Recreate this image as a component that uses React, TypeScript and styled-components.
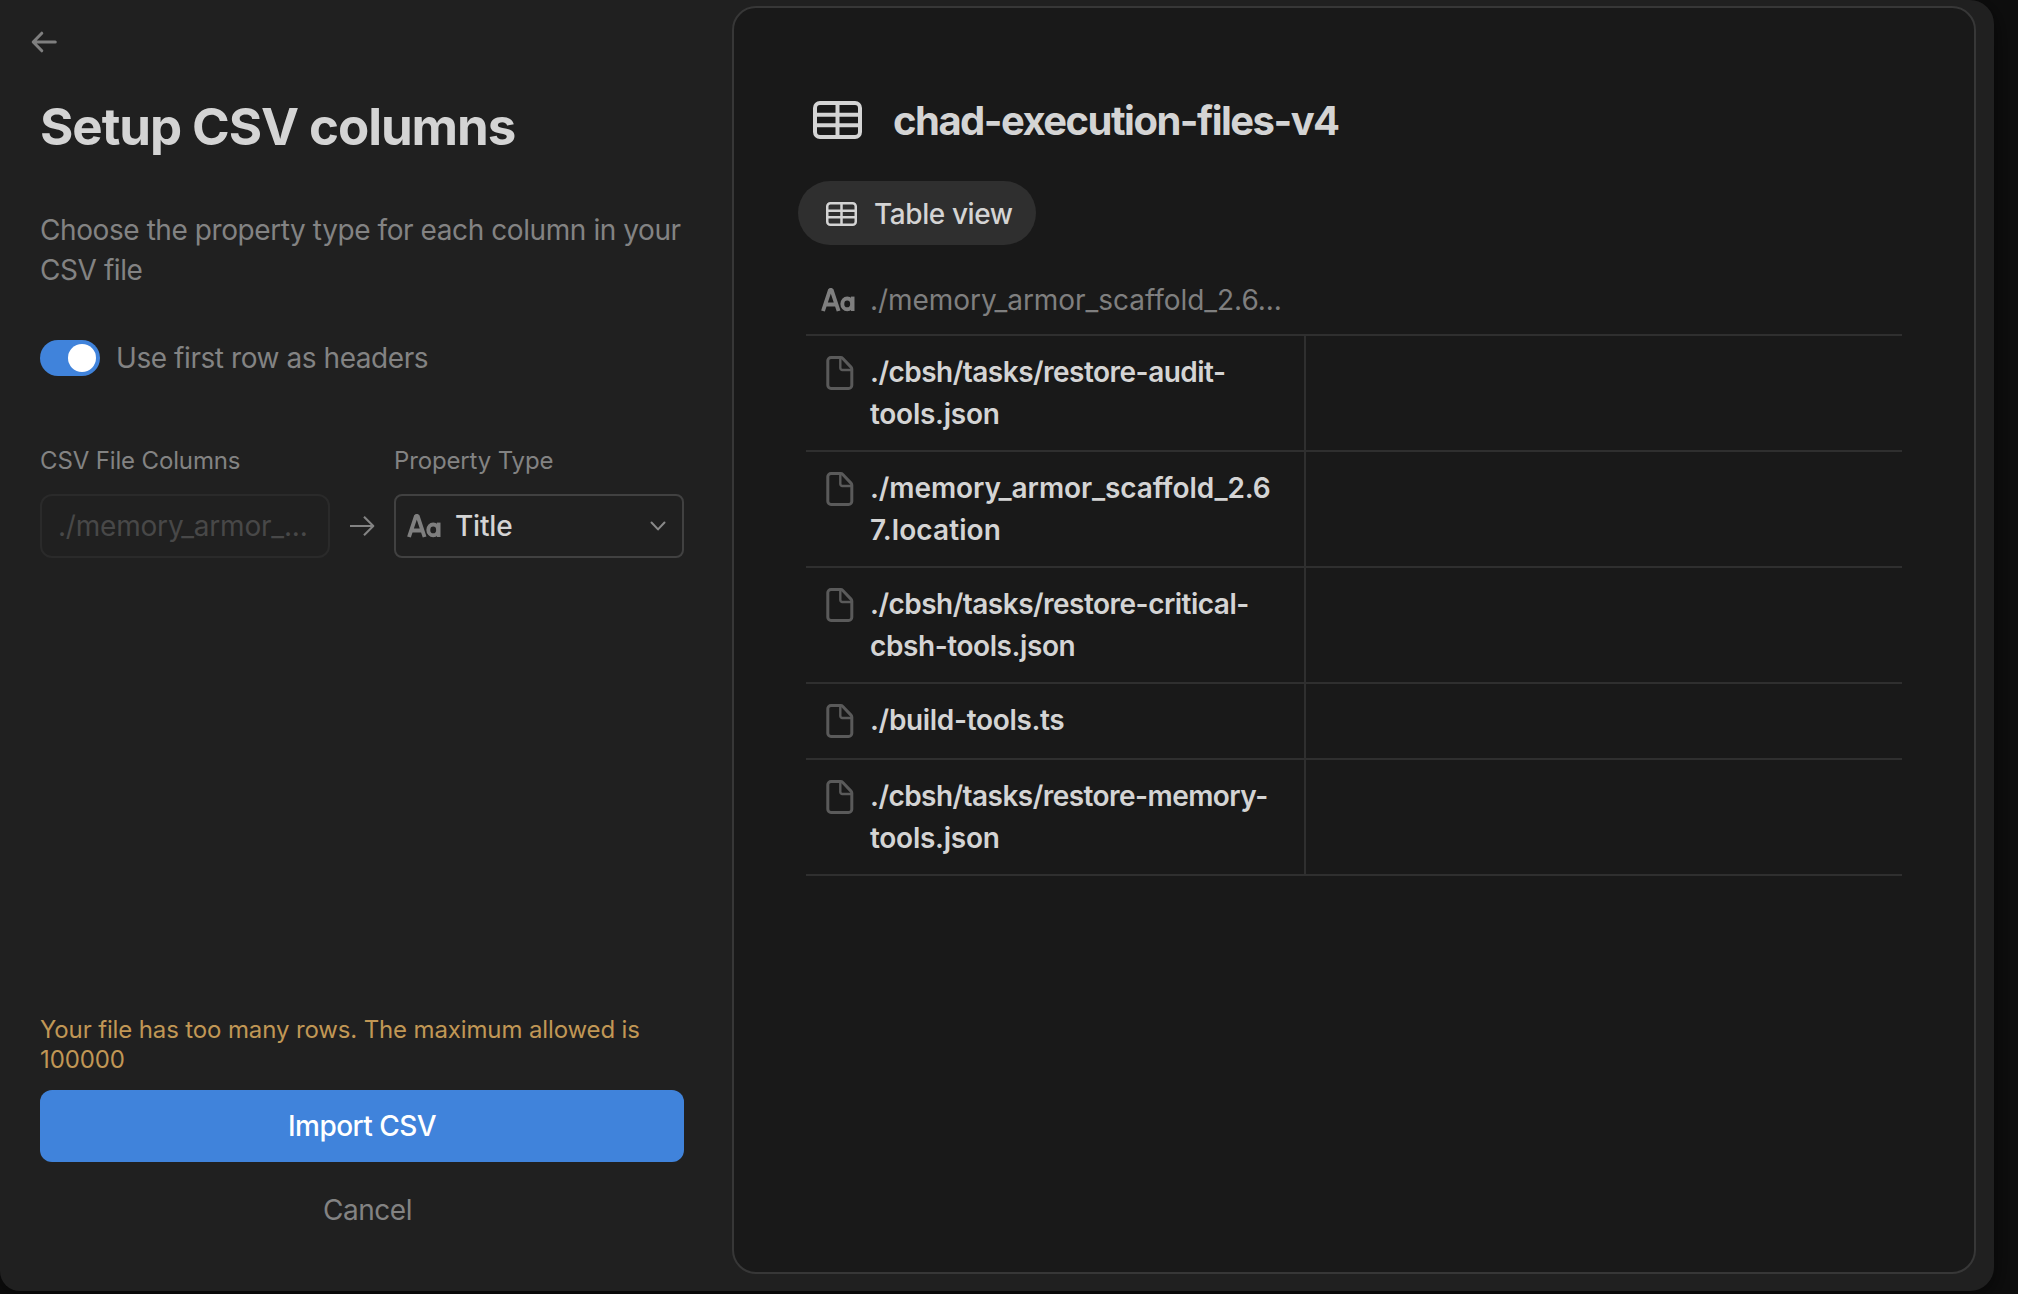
import React from "react";
import styled, { createGlobalStyle } from "styled-components";

const Global = createGlobalStyle`
  * { box-sizing: border-box; }
  body { margin: 0; background: #0e0e0e; }
`;

const Backdrop = styled.div`
  width: 2018px;
  height: 1294px;
  overflow: hidden;
  padding-bottom: 3px;
  background: #0e0e0e;
  font-family: Inter, "Liberation Sans", sans-serif;
  color: #d4d4d4;
`;

const Dialog = styled.main`
  display: flex;
  width: 1994px;
  height: 1291px;
  padding: 6px 18px 17px 0;
  border-radius: 0 24px 24px 20px;
  background: #202020;
  box-shadow: 0 6px 24px rgba(0, 0, 0, 0.6);
`;

const Sidebar = styled.section`
  display: flex;
  flex-direction: column;
  width: 732px;
  padding: 21px 48px 32px 40px;
`;

const BackButton = styled.button`
  display: flex;
  width: 30px;
  height: 30px;
  margin: 0 0 0 -11px;
  padding: 0;
  border: 0;
  background: none;
  color: #7f7f7f;
`;

const Title = styled.h1`
  margin: 40px 0 0;
  font-size: 51px;
  line-height: 60px;
  font-weight: 700;
  letter-spacing: -1.07px;
  white-space: nowrap;
`;

const Intro = styled.p`
  margin: 53px 0 0;
  font-size: 28px;
  line-height: 40px;
  letter-spacing: -0.42px;
  color: #838383;
  white-space: nowrap;
`;

const ToggleRow = styled.label`
  display: flex;
  align-items: center;
  gap: 16px;
  margin-top: 50px;
  height: 36px;
  font-size: 28px;
  letter-spacing: -0.43px;
  color: #838383;
`;

const Switch = styled.span`
  display: flex;
  justify-content: flex-end;
  width: 60px;
  height: 36px;
  padding: 4px;
  border-radius: 18px;
  background: #4083db;
`;

const Knob = styled.span`
  width: 28px;
  height: 28px;
  border-radius: 50%;
  background: #fff;
`;

const Mapping = styled.div`
  display: grid;
  grid-template-columns: 290px 64px 290px;
  row-gap: 16px;
  margin-top: 68px;
  align-items: center;
`;

const ColumnLabel = styled.span`
  font-size: 24px;
  line-height: 34px;
  letter-spacing: -0.14px;
  color: #838383;
`;

const Field = styled.div<{ $active?: boolean }>`
  display: flex;
  align-items: center;
  height: 64px;
  padding: ${(p) => (p.$active ? "0 14px 0 11px" : "0 16px")};
  border: 2px solid ${(p) => (p.$active ? "#414141" : "#2a2a2a")};
  border-radius: ${(p) => (p.$active ? 8 : 12)}px;
  font-size: 28px;
  font-weight: ${(p) => (p.$active ? 500 : 400)};
  letter-spacing: -0.2px;
  color: ${(p) => (p.$active ? "#d4d4d4" : "#484848")};
`;

const FieldText = styled.span`
  flex: 1;
  white-space: nowrap;
`;

const ArrowCell = styled.span`
  display: flex;
  justify-content: center;
  color: #838383;
`;

const Glyph = styled.span<{ $gap: number }>`
  display: flex;
  margin-right: ${(p) => p.$gap}px;
  color: #7f7f7f;
`;

const Footer = styled.footer`
  display: flex;
  flex-direction: column;
  margin-top: auto;
`;

const Warning = styled.p`
  margin: 0 0 15px;
  font-size: 24px;
  line-height: 30px;
  letter-spacing: -0.13px;
  color: #c19755;
  white-space: nowrap;
`;

const ImportButton = styled.button`
  height: 72px;
  border: 0;
  border-radius: 12px;
  background: #4083db;
  color: #fff;
  font: 500 28px Inter, "Liberation Sans", sans-serif;
  letter-spacing: -0.55px;
`;

const CancelButton = styled.button`
  height: 64px;
  margin-top: 16px;
  padding: 0 0 0 11px;
  border: 0;
  background: none;
  color: #838383;
  font: 400 28px Inter, "Liberation Sans", sans-serif;
  letter-spacing: -0.43px;
`;

const Preview = styled.section`
  flex: 1;
  padding: 84px 72px 0 72px;
  border: 2px solid #373737;
  border-radius: 24px;
  background: #191919;
`;

const Heading = styled.h2`
  display: flex;
  align-items: center;
  gap: 31px;
  height: 56px;
  margin: 0;
  padding-left: 7px;
  font-size: 40px;
  font-weight: 700;
  letter-spacing: -1.53px;
  white-space: nowrap;
`;

const ViewTab = styled.div`
  display: flex;
  align-items: center;
  gap: 17px;
  width: 238px;
  height: 64px;
  margin: 33px 0 0 -8px;
  padding: 1px 0 0 28px;
  border-radius: 32px;
  background: #2f2f2f;
  font-size: 28px;
  font-weight: 500;
  letter-spacing: -0.42px;
  white-space: nowrap;
`;

const HeaderRow = styled.div`
  display: flex;
  align-items: center;
  height: 66px;
  margin-top: 23px;
  padding: 0 0 2px 15px;
  font-size: 28px;
  letter-spacing: -0.04px;
  color: #7f7f7f;
`;

const Table = styled.div`
  border-top: 2px solid #2f2f2f;
`;

const Row = styled.div`
  display: flex;
  border-bottom: 2px solid #2f2f2f;
`;

const NameCell = styled.div`
  display: flex;
  align-items: flex-start;
  gap: 16px;
  width: 500px;
  min-height: 74px;
  padding: 15px 20px 15px 20px;
  border-right: 2px solid #2f2f2f;
  font-size: 28px;
  line-height: 42px;
  font-weight: 600;
`;

const FileMark = styled.span`
  display: flex;
  padding-top: 5px;
  color: #5a5a5a;
`;

const NameText = styled.span`
  display: flex;
  flex-direction: column;
`;

const NameLine = styled.span<{ $tracking: number }>`
  letter-spacing: ${(p) => p.$tracking}px;
  white-space: nowrap;
`;

type NamePart = { text: string; tracking: number };

const files: NamePart[][] = [
  [{ text: "./cbsh/tasks/restore-audit-", tracking: -0.52 }, { text: "tools.json", tracking: -0.27 }],
  [{ text: "./memory_armor_scaffold_2.6", tracking: -0.1 }, { text: "7.location", tracking: 0.1 }],
  [{ text: "./cbsh/tasks/restore-critical-", tracking: -0.52 }, { text: "cbsh-tools.json", tracking: -0.42 }],
  [{ text: "./build-tools.ts", tracking: -0.33 }],
  [{ text: "./cbsh/tasks/restore-memory-", tracking: -0.55 }, { text: "tools.json", tracking: -0.27 }],
];

const Lines = ({ items }: { items: string[] }) => (
  <>
    {items.map((line, i) => (
      <React.Fragment key={i}>
        {i > 0 && <br />}
        {line}
      </React.Fragment>
    ))}
  </>
);

const BackIcon = () => (
  <svg width="30" height="30" viewBox="0 0 30 30" fill="none" stroke="currentColor" strokeWidth="3" strokeLinecap="round" strokeLinejoin="round">
    <path d="M26.300 15H4.500M12.800 6.200L4.200 15l8.600 8.800" />
  </svg>
);

const ForwardIcon = () => (
  <svg width="26" height="26" viewBox="0 0 26 26" fill="none" stroke="currentColor" strokeWidth="2.1" strokeLinecap="butt" strokeLinejoin="round">
    <path d="M1 13H24.200M15 3.800L24.300 13L15 22.200" />
  </svg>
);

const ChevronIcon = () => (
  <svg width="20" height="20" viewBox="0 0 20 20" fill="none" stroke="#8a8a8a" strokeWidth="2" strokeLinecap="round" strokeLinejoin="round">
    <path d="M3.500 6.500L10 13.400l6.500-6.900" />
  </svg>
);

const AaIcon = () => (
  <svg width="34" height="24" viewBox="0 0 34 24" fill="none" stroke="currentColor" strokeWidth="3.900" strokeLinejoin="bevel">
    <path d="M2 23L9 1.800h1.600L17.600 23M5 16.500h9.600" />
    <ellipse cx="26.200" cy="15.900" rx="4.900" ry="5.400" />
    <path d="M31.700 8.600v14.400" strokeWidth="3.600" />
  </svg>
);

const TableIcon = ({ width, height, stroke }: { width: number; height: number; stroke: number }) => {
  const h = stroke / 2;
  return (
    <svg width={width} height={height} fill="none" stroke="currentColor" strokeWidth={stroke}>
      <rect x={h} y={h} width={width - stroke} height={height - stroke} rx={height * 0.13} />
      <path d={`M${h} ${height * 0.36}H${width - h}M${h} ${height * 0.64}H${width - h}M${width / 2} ${h}V${height - h}`} />
    </svg>
  );
};

const FileIcon = () => (
  <svg width="28" height="34" viewBox="0 0 28 34" fill="none" stroke="currentColor" strokeWidth="3" strokeLinejoin="round">
    <path d="M5 1.600h9.600a3 3 0 0 1 2.200.9l8.200 8.600a3 3 0 0 1 .8 2V29.200a3.200 3.200 0 0 1-3.200 3.200H5A3.200 3.200 0 0 1 1.800 29.200V4.800A3.200 3.200 0 0 1 5 1.600z" />
    <path d="M14.300 2v10a2 2 0 0 0 2 2h9.300" strokeWidth="2.400" />
  </svg>
);

export default function App() {
  return (
    <Backdrop>
      <Global />
      <Dialog>
        <Sidebar>
          <BackButton aria-label="Back"><BackIcon /></BackButton>
          <Title>Setup CSV columns</Title>
          <Intro><Lines items={["Choose the property type for each column in your", "CSV file"]} /></Intro>
          <ToggleRow>
            <Switch><Knob /></Switch>
            <span>Use first row as headers</span>
          </ToggleRow>
          <Mapping>
            <ColumnLabel>CSV File Columns</ColumnLabel>
            <span />
            <ColumnLabel>Property Type</ColumnLabel>
            <Field><FieldText>./memory_armor_...</FieldText></Field>
            <ArrowCell><ForwardIcon /></ArrowCell>
            <Field $active>
              <Glyph $gap={14}><AaIcon /></Glyph>
              <FieldText>Title</FieldText>
              <ChevronIcon />
            </Field>
          </Mapping>
          <Footer>
            <Warning><Lines items={["Your file has too many rows. The maximum allowed is", "100000"]} /></Warning>
            <ImportButton>Import CSV</ImportButton>
            <CancelButton>Cancel</CancelButton>
          </Footer>
        </Sidebar>
        <Preview>
          <Heading><TableIcon width={49} height={38} stroke={4} />chad-execution-files-v4</Heading>
          <ViewTab><TableIcon width={31} height={24} stroke={2.5} />Table view</ViewTab>
          <HeaderRow>
            <Glyph $gap={15}><AaIcon /></Glyph>
            ./memory_armor_scaffold_2.6...
          </HeaderRow>
          <Table>
            {files.map((parts) => (
              <Row key={parts[0].text}>
                <NameCell>
                  <FileMark><FileIcon /></FileMark>
                  <NameText>
                    {parts.map((part) => (
                      <NameLine key={part.text} $tracking={part.tracking}>{part.text}</NameLine>
                    ))}
                  </NameText>
                </NameCell>
              </Row>
            ))}
          </Table>
        </Preview>
      </Dialog>
    </Backdrop>
  );
}
